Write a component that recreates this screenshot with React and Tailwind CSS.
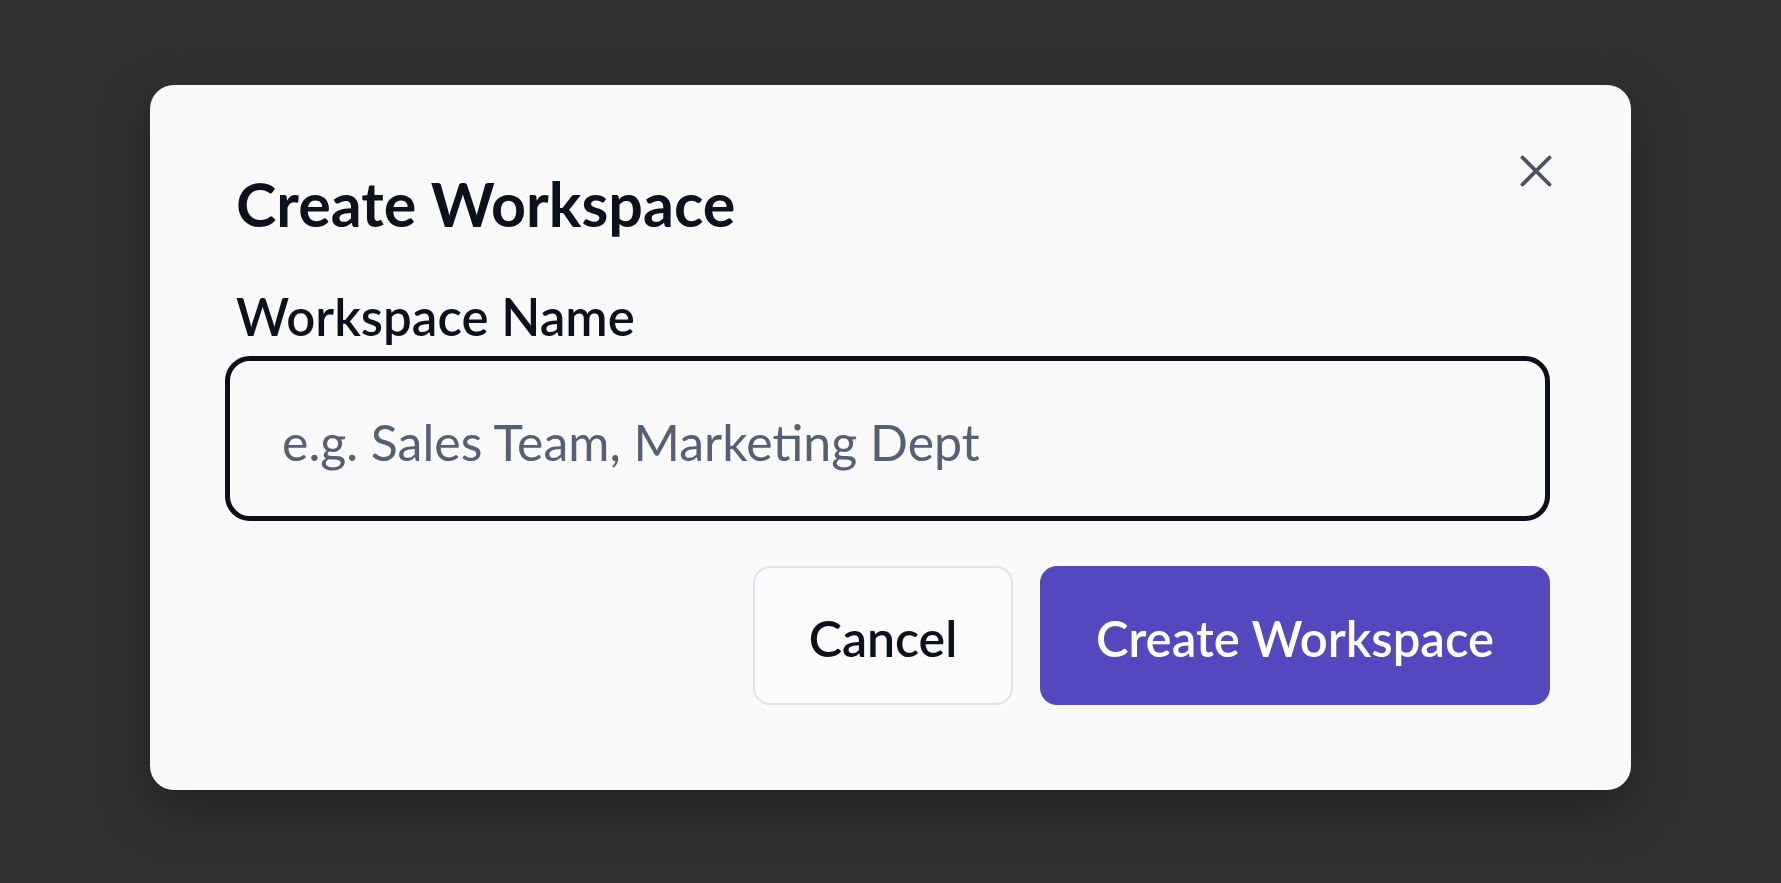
import React, { useState } from "react";

const font = { fontFamily: "Lato, 'Noto Sans', 'Liberation Sans', sans-serif" };

const CloseIcon = () => (
  <svg width="32" height="32" viewBox="0 0 32 32" fill="none" stroke="#4a5263" strokeWidth="3.8" strokeLinecap="round">
    <path d="M2.5 2.5 29.5 29.5" />
    <path d="M29.5 2.5 2.5 29.5" />
  </svg>
);

const App = () => {
  const [name, setName] = useState("");

  return (
    <div className="min-h-screen w-full bg-[#313131] flex items-start justify-center pt-[85px]" style={font}>
      {/* Modal */}
      <div className="relative w-[1481px] h-[705px] bg-[#fafafa] rounded-[24px] shadow-[0_18px_50px_rgba(0,0,0,0.35)] pl-[75px] pr-[81px] pt-[82px]">
        <button className="absolute top-[70px] right-[79px] w-[32px] h-[32px] flex items-center justify-center">
          <CloseIcon />
        </button>

        <h2 className="text-[61px] leading-[1.2] font-bold text-[#0d111d] pl-[11px]">Create Workspace</h2>

        <label className="block mt-[48px] pl-[11px] text-[51px] leading-[1.15] font-semibold text-[#0d111d]">
          Workspace Name
        </label>

        <input
          type="text"
          value={name}
          onChange={(e) => setName(e.target.value)}
          placeholder="e.g. Sales Team, Marketing Dept"
          className="mt-[9px] block w-full h-[165px] border-[5px] border-[#0c0f1a] rounded-[25px] bg-[#fafafa] pl-[52px] pt-[8px] text-[50px] text-[#0d111d] placeholder:text-[#556076] outline-none"
        />

        <div className="mt-[45px] flex justify-end gap-[27px]">
          <button className="w-[260px] h-[139px] rounded-[17px] border-2 border-[#dfe3ea] bg-[#fbfbfb] pt-[6px] text-[50px] font-semibold text-[#0d111d]">
            Cancel
          </button>
          <button className="w-[510px] h-[139px] rounded-[17px] bg-[#5348bd] pt-[6px] text-[49px] font-semibold text-white">
            Create Workspace
          </button>
        </div>
      </div>
    </div>
  );
};

export default App;
